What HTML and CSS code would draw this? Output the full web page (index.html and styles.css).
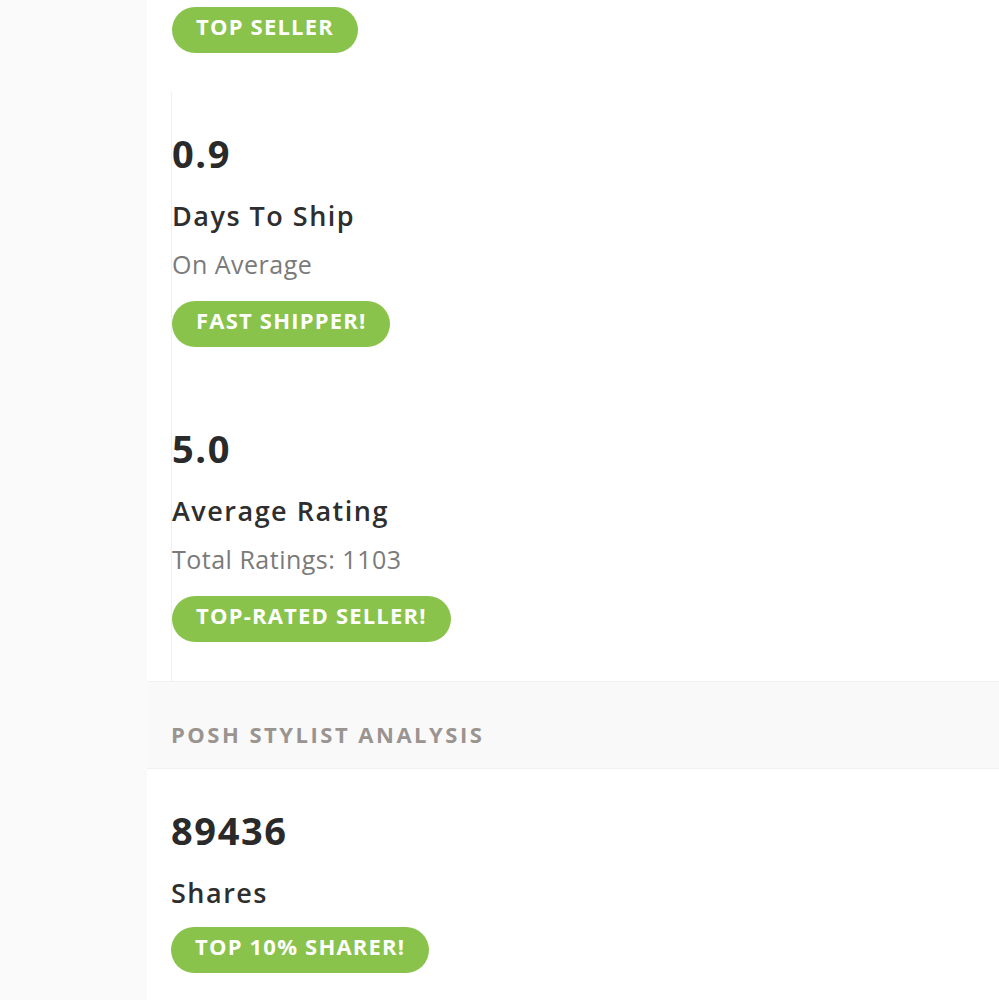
FILE: index.html
```html
<!DOCTYPE html>
<html>
<head>
<meta charset="utf-8">
<link rel="stylesheet" href="styles.css">
</head>
<body>
<div class="page">
  <aside class="sidebar"></aside>
  <main class="main">
    <div class="top-badge-row">
      <span class="badge">Top Seller</span>
    </div>
    <div class="stats">
      <div class="stat">
        <div class="stat-num">0.9</div>
        <div class="stat-label">Days To Ship</div>
        <div class="stat-sub">On Average</div>
        <span class="badge">Fast Shipper!</span>
      </div>
      <div class="stat">
        <div class="stat-num">5.0</div>
        <div class="stat-label">Average Rating</div>
        <div class="stat-sub">Total Ratings: 1103</div>
        <span class="badge">Top-Rated Seller!</span>
      </div>
    </div>
    <div class="section-head">Posh Stylist Analysis</div>
    <div class="stats plain">
      <div class="stat">
        <div class="stat-num">89436</div>
        <div class="stat-label">Shares</div>
        <span class="badge">Top 10% Sharer!</span>
      </div>
    </div>
  </main>
</div>
</body>
</html>
```

FILE: styles.css
```css
* { box-sizing: border-box; }
html, body { margin: 0; padding: 0; background: #ffffff; }
body {
  font-family: "Open Sans", "Noto Sans", sans-serif;
  color: #2e2e2e;
}
.page {
  display: flex;
  min-height: 1000px;
}
.sidebar {
  width: 147px;
  flex: 0 0 147px;
  background: #fafafa;
}
.main {
  flex: 1;
  background: #ffffff;
}
.top-badge-row {
  padding: 7px 0 39px 25px;
}
.badge {
  display: inline-block;
  height: 46px;
  line-height: 39px;
  padding: 0 24px 7px;
  border-radius: 23px;
  background: #89c34c;
  color: #ffffff;
  font-weight: 700;
  font-size: 22px;
  letter-spacing: 1.2px;
  text-transform: uppercase;
  white-space: nowrap;
}
.stats {
  margin-left: 24px;
  border-left: 1px solid #efefef;
}
.stats.plain {
  border-left: none;
}
.stat {
  display: flex;
  flex-direction: column;
  align-items: flex-start;
  padding: 38px 0 39.5px 0;
}
.stat-num {
  font-size: 38px;
  line-height: 46px;
  font-weight: 700;
  letter-spacing: 1.6px;
  color: #2a2a2a;
}
.stat-label {
  margin-top: 24px;
  font-size: 27px;
  line-height: 32px;
  font-weight: 600;
  letter-spacing: 1.5px;
  color: #2e2e2e;
}
.stat-sub {
  margin-top: 16px;
  font-size: 25px;
  line-height: 32px;
  font-weight: 400;
  letter-spacing: 0.5px;
  color: #7a7a7a;
}
.stat .badge { margin-top: 21px; }
.stat:last-child .stat-label + .badge { margin-top: 18px; }
.section-head {
  background: #f9f9f9;
  border-top: 1px solid #f1f1f1;
  border-bottom: 1px solid #f1f1f1;
  padding: 38px 0 21px 24px;
  height: 88px;
  font-size: 22px;
  line-height: 28px;
  font-weight: 700;
  letter-spacing: 2.5px;
  color: #9a9490;
  text-transform: uppercase;
}
```
